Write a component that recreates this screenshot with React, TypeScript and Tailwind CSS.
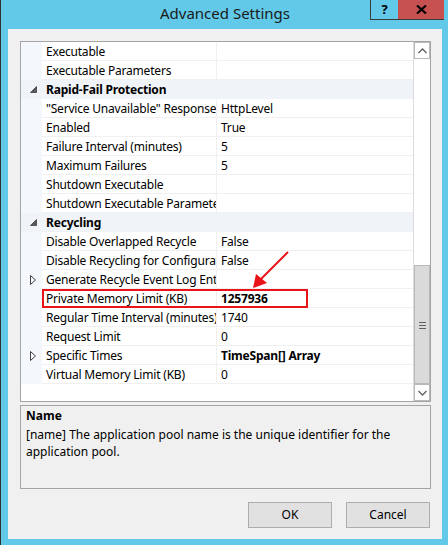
import React from 'react';

type Row = {
  name: string;
  value?: string;
  kind?: 'category' | 'item';
  bold?: boolean;
  expander?: boolean;
  highlight?: boolean;
};

const rows: Row[] = [
  { name: 'Executable' },
  { name: 'Executable Parameters' },
  { name: 'Rapid-Fail Protection', kind: 'category' },
  { name: '"Service Unavailable" Response Type', value: 'HttpLevel' },
  { name: 'Enabled', value: 'True' },
  { name: 'Failure Interval (minutes)', value: '5' },
  { name: 'Maximum Failures', value: '5' },
  { name: 'Shutdown Executable' },
  { name: 'Shutdown Executable Parameters' },
  { name: 'Recycling', kind: 'category' },
  { name: 'Disable Overlapped Recycle', value: 'False' },
  { name: 'Disable Recycling for Configuration Changes', value: 'False' },
  { name: 'Generate Recycle Event Log Entry', expander: true },
  { name: 'Private Memory Limit (KB)', value: '1257936', bold: true, highlight: true },
  { name: 'Regular Time Interval (minutes)', value: '1740' },
  { name: 'Request Limit', value: '0' },
  { name: 'Specific Times', value: 'TimeSpan[] Array', bold: true, expander: true },
  { name: 'Virtual Memory Limit (KB)', value: '0' },
];

function ExpandedGlyph() {
  return (
    <svg width="7" height="7" viewBox="0 0 7 7">
      <polygon points="6.5,0.5 6.5,6.5 0.5,6.5" fill="#595959" stroke="#404040" strokeWidth="0.8" />
    </svg>
  );
}

function CollapsedGlyph() {
  return (
    <svg width="6" height="10" viewBox="0 0 6 10">
      <polygon points="0.5,0.5 5.5,5 0.5,9.5" fill="none" stroke="#404040" strokeWidth="1" />
    </svg>
  );
}

function GridRow({ row }: { row: Row }) {
  if (row.kind === 'category') {
    return (
      <div className="flex h-[19px] bg-[#f0f4f9]">
        <div className="w-[21px] flex items-center justify-center pl-[3px]">
          <ExpandedGlyph />
        </div>
        <div className="flex-1 flex items-center pl-[4px] pt-px font-bold text-black">{row.name}</div>
      </div>
    );
  }
  return (
    <div className="flex h-[19px]">
      <div className="w-[21px] bg-[#f4f7fb] flex items-center justify-center pl-[2px]">
        {row.expander && <CollapsedGlyph />}
      </div>
      <div className="flex flex-1 border-b border-[#f0f0f0] relative">
        <div className="w-[175px] border-r border-[#f0f0f0] pl-[4px] pt-px flex items-center overflow-hidden whitespace-nowrap">
          {row.name}
        </div>
        <div className={`flex-1 pl-[4px] pt-px flex items-center whitespace-nowrap ${row.bold ? 'font-bold' : ''}`}>
          {row.value}
        </div>
        {row.highlight && (
          <div className="absolute left-0 top-[0px] w-[266px] h-[19px] border-2 border-[#e8141a]" />
        )}
      </div>
    </div>
  );
}

function ScrollBar() {
  return (
    <div className="w-[17px] flex flex-col bg-[#f0f0f0] border-l border-[#dcdcdc]">
      <div className="h-[17px] bg-white border border-[#b9b9b9] flex items-center justify-center">
        <svg width="9" height="6" viewBox="0 0 9 6">
          <path d="M0.5 5 L4.5 1 L8.5 5" fill="none" stroke="#606060" strokeWidth="1.3" />
        </svg>
      </div>
      <div className="h-[206px] bg-white" />
      <div className="flex-1 bg-[#dadada] border border-[#b9b9b9] flex items-center justify-center">
        <div className="flex flex-col gap-[2px] mt-[2px]">
          <div className="w-[7px] h-px bg-[#606060]" />
          <div className="w-[7px] h-px bg-[#606060]" />
          <div className="w-[7px] h-px bg-[#606060]" />
        </div>
      </div>
      <div className="h-[17px] bg-white border border-[#b9b9b9] flex items-center justify-center">
        <svg width="9" height="6" viewBox="0 0 9 6">
          <path d="M0.5 1 L4.5 5 L8.5 1" fill="none" stroke="#606060" strokeWidth="1.3" />
        </svg>
      </div>
    </div>
  );
}

export default function App() {
  return (
    <div
      className="relative w-[448px] h-[545px] bg-[#62c9e8] border-l border-[#303030] flex flex-col text-[12px] text-black"
      style={{ fontFamily: '"Segoe UI", "Noto Sans", sans-serif' }}
    >
      <div className="h-[29px] flex items-start">
        <div className="flex-1 pl-[79px] pt-[2px] text-center text-[15px] text-[#1a1a1a]">Advanced Settings</div>
        <div className="flex mr-[4px]">
          <div className="w-[28px] h-[20px] border border-t-0 border-r-0 border-[#3a3a3a] flex items-center justify-center font-bold text-[13px]">
            ?
          </div>
          <div className="w-[46px] h-[20px] bg-[#c75050] border-b border-[#3a3a3a] flex items-center justify-center">
            <svg width="11" height="9" viewBox="0 0 11 9">
              <path d="M1 0.5 L10 8.5 M10 0.5 L1 8.5" stroke="#000" strokeWidth="2.2" />
            </svg>
          </div>
        </div>
      </div>

      <div className="ml-[7px] w-[434px] h-[510px] bg-[#f0f0f0] flex flex-col px-[12px] pt-[12px]">
        <div className="h-[361px] w-[411px] border border-[#a5a5a5] bg-white flex tracking-[-0.2px]">
          <div className="flex-1 flex flex-col">
            {rows.map((r) => (
              <GridRow key={r.name} row={r} />
            ))}
            <div className="flex-1 flex">
              <div className="w-[21px] bg-white" />
            </div>
          </div>
          <ScrollBar />
        </div>

        <div className="mt-[3px] h-[84px] w-[411px] border border-[#a5a5a5] bg-[#f0f0f0] px-[5px] pt-[1px] leading-[17px]">
          <div className="font-bold">Name</div>
          <div className="mt-[2px]">
            [name] The application pool name is the unique identifier for the application pool.
          </div>
        </div>

        <div className="flex justify-end gap-[14px] mt-[13px] pr-[0px]">
          <div className="w-[84px] h-[26px] bg-[#e1e1e1] border border-[#adadad] flex items-center justify-center">OK</div>
          <div className="w-[84px] h-[26px] bg-[#e1e1e1] border border-[#adadad] flex items-center justify-center">Cancel</div>
        </div>
      </div>

      <svg className="absolute left-0 top-0 pointer-events-none" width="448" height="545" viewBox="0 0 448 545">
        <line x1="287" y1="252" x2="260" y2="279" stroke="#e8141a" strokeWidth="2" />
        <polygon points="252,288 255,274 266,283" fill="#e8141a" />
      </svg>
    </div>
  );
}
